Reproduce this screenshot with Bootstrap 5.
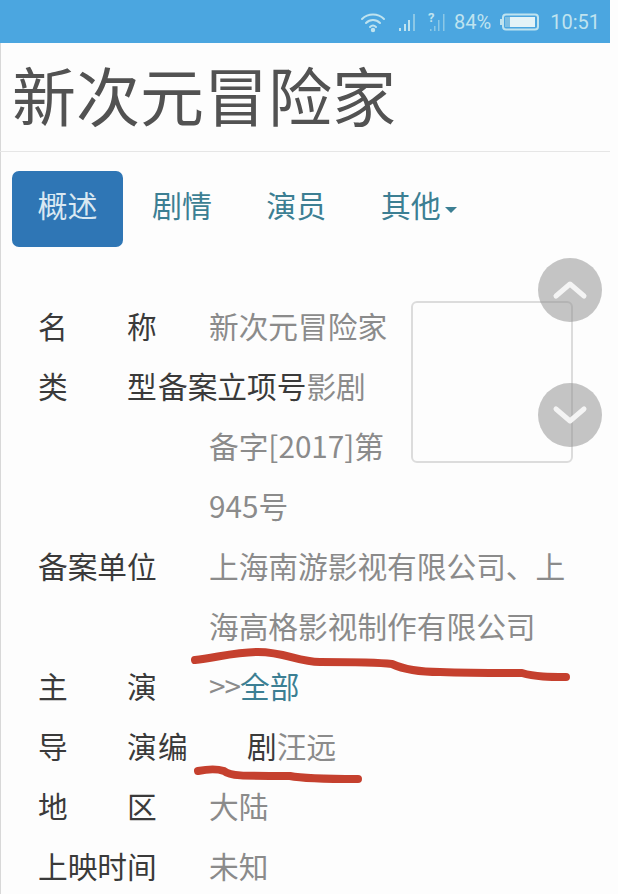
<!DOCTYPE html>
<html lang="zh-CN">
<head>
<meta charset="utf-8">
<title>新次元冒险家</title>
<link rel="stylesheet" href="https://cdn.jsdelivr.net/npm/bootstrap@5.3.0/dist/css/bootstrap.min.css">
<style>
html,body{height:100%}
body{background:#fdfdfd;font-family:"Noto Sans CJK SC","Liberation Sans",sans-serif;overflow:hidden}
.phone{position:relative;width:618px;height:894px;overflow:hidden;box-shadow:inset 1px 0 0 #d8d8d8}
.statusline{height:43px;width:610px;background:#4ba6e0;color:#bfe3ef;font-family:Roboto,"Liberation Sans",sans-serif;font-size:20px;padding-right:10px}
.statusline svg{display:block}
.pagehead{width:610px;height:109px;border-bottom:1px solid #e6e6e6;padding-left:12px}
.pagehead h1{font-size:64px;line-height:100px;margin:0;color:#525252;font-weight:400;white-space:nowrap}
.tabs{padding:19px 0 0 12px;gap:3.4px}
.tabs .nav-link{font-size:30px;line-height:44px;padding:11px 25.5px 21px;color:#3c7f93;border-radius:7px}
.tabs .nav-link.active{background:#2f76b5;color:#d9e8f2}
.tabs .dropdown-toggle::after{border-top-color:#3c7f93;margin-left:4px;vertical-align:4px;border-top-width:6px;border-left-width:6px;border-right-width:6px;border-bottom:0}
.infosheet{margin:49px 0 0 38px;width:535px;font-size:29.7px;line-height:60px;color:#8b8b8b}
.posterbox{float:right;width:162px;height:162px;margin:5px 0 0 19px;border:2px solid #dcdcdc;border-radius:6px}
.inforow dt{float:left;width:120px;font-weight:400;color:#3a3a3a;white-space:nowrap;height:60px}
.inforow dd{margin:0 0 0 171px;min-height:60px}
.inforow a{color:#3c7f93;text-decoration:none}
.pull-first{text-indent:-51px}
.pull-first .extra-label{color:#3a3a3a}
.arrows-mark{letter-spacing:-1px}
.scrollbtn{position:absolute;left:538px;width:64px;height:64px;border-radius:50%;background:rgba(140,140,140,.5);display:flex;align-items:center;justify-content:center}
.btn-up{top:258px}
.btn-down{top:383px}
.markup{position:absolute;left:0;top:0;pointer-events:none}
</style>
</head>
<body>
<div class="phone">
  <div class="statusline d-flex align-items-center justify-content-end">
    <svg width="26" height="22" viewBox="0 0 26 22" fill="none" stroke="#bfe3ef" stroke-width="2" stroke-linecap="round" style="margin-right:12px"><path d="M2 8c6-6 16-6 22 0"/><path d="M6 12c4-4 10-4 14 0"/><path d="M10 16c2-2 4-2 6 0"/><circle cx="13" cy="19" r="1.2" fill="#bfe3ef"/></svg>
    <svg width="18" height="20" viewBox="0 0 18 20" style="margin-right:12px"><rect x="1" y="16" width="2" height="3" fill="#bfe3ef"/><rect x="6" y="12" width="2" height="7" fill="#bfe3ef"/><rect x="10" y="8" width="2" height="11" fill="#bfe3ef"/><rect x="15" y="2" width="2" height="17" fill="#8cc8e6"/></svg>
    <svg width="18" height="22" viewBox="0 0 18 22" style="margin-right:8px"><text x="0" y="11" font-size="13" font-weight="700" font-family="Roboto,sans-serif" fill="#bfe3ef">?</text><rect x="2" y="18" width="1.5" height="2" fill="#8cc8e6"/><rect x="6" y="15" width="1.5" height="5" fill="#8cc8e6"/><rect x="10" y="9" width="1.5" height="11" fill="#8cc8e6"/><rect x="15" y="3" width="1.5" height="17" fill="#8cc8e6"/></svg>
    <span>84%</span>
    <svg width="40" height="18" viewBox="0 0 40 18" style="margin:0 10px 0 9px"><rect x="3" y="1.5" width="35" height="15" rx="3" fill="none" stroke="#bfe3ef" stroke-width="2"/><rect x="0" y="6" width="2" height="6" fill="#bfe3ef"/><rect x="10" y="4" width="25" height="10" fill="#e4f3f7"/><rect x="5" y="4" width="5" height="10" fill="#7fbfe2"/></svg>
    <span>10:51</span>
  </div>
  <div class="pagehead"><h1>新次元冒险家</h1></div>
  <nav class="nav nav-pills tabs">
    <a class="nav-link active" href="#">概述</a>
    <a class="nav-link" href="#">剧情</a>
    <a class="nav-link" href="#">演员</a>
    <a class="nav-link dropdown-toggle" href="#">其他</a>
  </nav>
  <div class="infosheet">
    <div class="posterbox"></div>
    <dl class="m-0">
      <div class="inforow"><dt>名　　称</dt><dd>新次元冒险家</dd></div>
      <div class="inforow"><dt>类　　型</dt><dd class="pull-first"><span class="extra-label">备案立项号</span><span>影剧</span><span>备字[2017]第945号</span></dd></div>
      <div class="inforow"><dt>备案单位</dt><dd>上海南游影视有限公司、上海高格影视制作有限公司</dd></div>
      <div class="inforow"><dt>主　　演</dt><dd><span class="arrows-mark">&gt;&gt;</span><a href="#">全部</a></dd></div>
      <div class="inforow"><dt>导　　演</dt><dd class="pull-first"><span class="extra-label">编　　剧</span>汪远</dd></div>
      <div class="inforow"><dt>地　　区</dt><dd>大陆</dd></div>
      <div class="inforow"><dt>上映时间</dt><dd>未知</dd></div>
    </dl>
  </div>
  <div class="scrollbtn btn-up"><svg width="36" height="22" viewBox="0 0 36 22" fill="none" stroke="#f4f4f4" stroke-width="5" stroke-linecap="round" stroke-linejoin="round"><path d="M4 17L18 5l14 12"/></svg></div>
  <div class="scrollbtn btn-down"><svg width="36" height="22" viewBox="0 0 36 22" fill="none" stroke="#f4f4f4" stroke-width="5" stroke-linecap="round" stroke-linejoin="round"><path d="M4 5l14 12L32 5"/></svg></div>
  <svg class="markup" width="618" height="894" viewBox="0 0 618 894" fill="none" stroke="#c5402e" stroke-width="8" stroke-linecap="round" stroke-linejoin="round">
    <path d="M195 660C215 658 235 652 258 652C285 652 298 662 320 662C345 662 375 662 392 664C405 670 420 672 440 672C470 673 510 673 522 673C535 677 550 677 566 677"/>
    <path d="M198 771C208 769 218 769 224 771C230 776 240 776 290 776C305 779 330 779 358 779"/>
  </svg>
</div>
<script src="https://cdn.jsdelivr.net/npm/bootstrap@5.3.0/dist/js/bootstrap.bundle.min.js"></script>
</body>
</html>
